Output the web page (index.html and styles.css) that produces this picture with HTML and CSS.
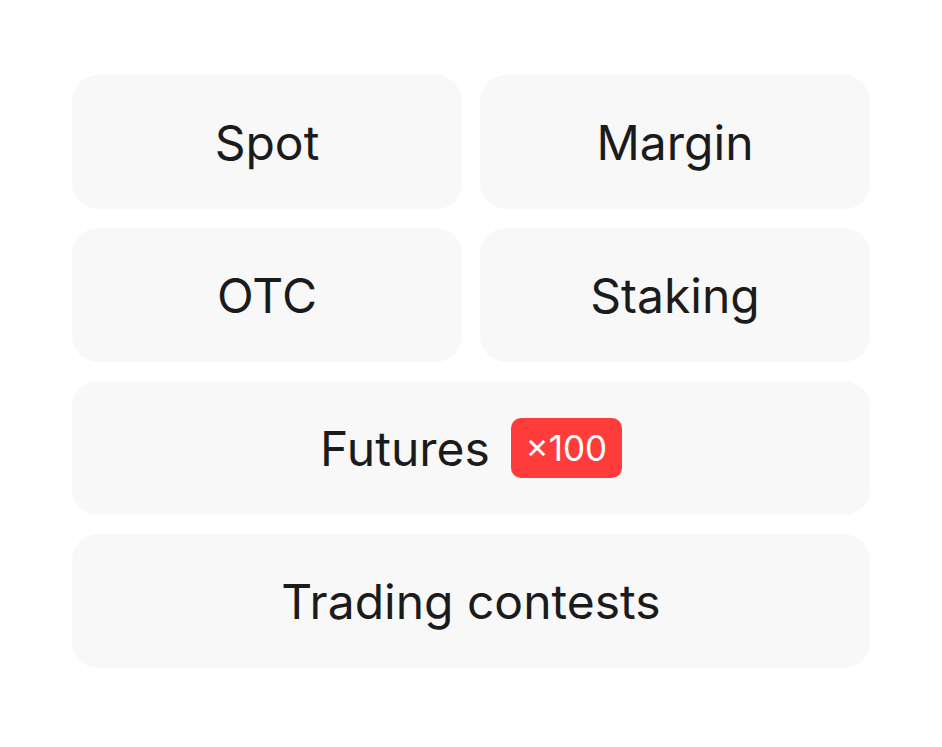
FILE: index.html
```html
<!DOCTYPE html>
<html>
<head>
<meta charset="utf-8">
<link rel="stylesheet" href="styles.css">
</head>
<body>
<div class="grid">
  <div class="card">Spot</div>
  <div class="card">Margin</div>
  <div class="card">OTC</div>
  <div class="card">Staking</div>
  <div class="card wide"><span>Futures</span><span class="badge">×100</span></div>
  <div class="card wide">Trading contests</div>
</div>
</body>
</html>
```
FILE: styles.css
```css
html, body {
  margin: 0;
  padding: 0;
  background: #ffffff;
}
body {
  padding: 75px 72px;
  font-family: Inter, "Noto Sans", sans-serif;
}
.grid {
  width: 798px;
  display: grid;
  grid-template-columns: 390px 390px;
  column-gap: 18px;
  row-gap: 19px;
}
.card {
  height: 134px;
  border-radius: 26px;
  background: #f8f8f8;
  display: flex;
  align-items: center;
  justify-content: center;
  font-size: 48px;
  color: #1b1b1b;
  letter-spacing: 0;
}
.wide {
  grid-column: span 2;
}
.badge {
  display: inline-flex;
  align-items: center;
  justify-content: center;
  margin-left: 21px;
  width: 111px;
  height: 60px;
  border-radius: 10px;
  background: #ff3c3c;
  color: #ffffff;
  font-size: 35px;
}
```
